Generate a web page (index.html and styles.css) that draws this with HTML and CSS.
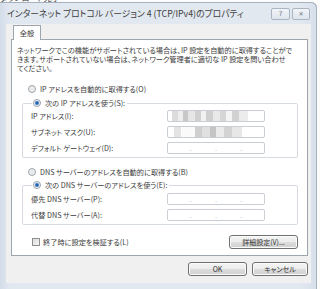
FILE: index.html
```html
<!DOCTYPE html>
<html lang="ja">

<head>
    <meta charset="UTF-8">
    <meta name="viewport" content="width=device-width, initial-scale=1.0">
    <title>インターネット プロトコル バージョン 4 (TCP/IPv4)のプロパティ</title>
    <link rel="stylesheet" href="styles.css">
</head>

<body>
    <div class="behind"><span>ダウンロード完了</span></div>
    <div class="window">
        <div class="titlebar">
            <span class="title">インターネット プロトコル バージョン 4 (TCP/IPv4)のプロパティ</span>
            <div class="capBtns">
                <span class="capBtn help">?</span>
                <span class="capBtn close">✕</span>
            </div>
        </div>
        <div class="client">
            <div class="tabs"><span class="tab">全般</span></div>
            <div class="panel">
                <p class="intro">ネットワークでこの機能がサポートされている場合は、IP 設定を自動的に取得することがで<br>きます。サポートされていない場合は、ネットワーク管理者に適切な IP 設定を問い合わせ<br>てください。</p>

                <div class="radioLine first"><span class="radio"></span>IP アドレスを自動的に取得する(O)</div>
                <fieldset class="group ipGroup">
                    <legend class="radioLine"><span class="radio on"></span>次の IP アドレスを使う(S):</legend>
                    <div class="fields">
                        <span class="lbl">IP アドレス(I):</span><span class="ipBox mosaic"></span>
                        <span class="lbl">サブネット マスク(U):</span><span class="ipBox mosaic two"></span>
                        <span class="lbl">デフォルト ゲートウェイ(D):</span><span class="ipBox"><i>.</i><i>.</i><i>.</i></span>
                    </div>
                </fieldset>

                <div class="radioLine dnsAuto"><span class="radio"></span>DNS サーバーのアドレスを自動的に取得する(B)</div>
                <fieldset class="group dnsGroup">
                    <legend class="radioLine"><span class="radio on"></span>次の DNS サーバーのアドレスを使う(E):</legend>
                    <div class="fields">
                        <span class="lbl">優先 DNS サーバー(P):</span><span class="ipBox"><i>.</i><i>.</i><i>.</i></span>
                        <span class="lbl">代替 DNS サーバー(A):</span><span class="ipBox"><i>.</i><i>.</i><i>.</i></span>
                    </div>
                </fieldset>

                <div class="checkRow">
                    <label class="check"><span class="box"></span>終了時に設定を検証する(L)</label>
                    <span class="btn adv">詳細設定(V)...</span>
                </div>
            </div>
            <div class="footer">
                <span class="btn ok">OK</span>
                <span class="btn cancel">キャンセル</span>
            </div>
        </div>
    </div>
</body>

</html>
```

FILE: styles.css
```css
body {
    margin: 0;
    height: 289px;
    overflow: hidden;
    background: #fbfbfb;
    font-family: "Noto Sans CJK JP", "Noto Sans", sans-serif;
    font-feature-settings: "palt";
    color: #3a3a3a;
}
.behind {
    height: 2px;
    overflow: hidden;
}
.behind>span {
    display: block;
    margin-top: -6px;
    font-size: 8px;
    line-height: 8px;
    color: #333;
}
.window {
    width: 317px;
    height: 287px;
    background: linear-gradient(90deg, #d3dde9, #e2e8f0 10px, #e2e8f0 300px, #d6dfea);
    border-top-right-radius: 6px;
    box-shadow: inset -1px 0 #a7b2c0, inset 0 1px #a7b2c0;
    display: flex;
    flex-direction: column;
}
.titlebar {
    height: 22px;
    display: flex;
    align-items: center;
    justify-content: space-between;
    padding: 0 7px 0 7px;
}
.title {
    font-size: 8.8px;
    color: #404040;
    white-space: nowrap;
    padding-top: 1px;
}
.capBtns {
    display: flex;
    gap: 2px;
    padding-top: 1px;
}
.capBtn {
    height: 10px;
    border: 1px solid #aab5c3;
    border-radius: 2px;
    background: linear-gradient(#f1f4f8, #dfe5ed);
    font-size: 7px;
    line-height: 10px;
    text-align: center;
    color: #6a7480;
    font-family: "DejaVu Sans", sans-serif;
}
.capBtn.help {
    width: 17px;
}
.capBtn.close {
    width: 16px;
    font-size: 6px;
}
.client {
    margin: 0 6px;
    height: 259px;
    background: #f0f0f0;
    padding: 1px 3px 0 5px;
    box-sizing: border-box;
}
.tabs {
    display: flex;
    padding-left: 2px;
    position: relative;
    z-index: 1;
    margin-bottom: -1px;
}
.tab {
    width: 26px;
    height: 14px;
    border: 1px solid #9da5ad;
    border-bottom: none;
    background: #fff;
    font-size: 7.2px;
    line-height: 14px;
    text-align: center;
}
.panel {
    background: #fff;
    border: 1px solid #9da5ad;
    padding: 6px 9px 6px 5px;
    font-size: 7.2px;
}
.intro {
    margin: 0;
    line-height: 9px;
    white-space: nowrap;
}
.radioLine {
    display: flex;
    align-items: center;
    height: 12px;
    white-space: nowrap;
}
.radioLine.first {
    margin: 10px 0 2px 11px;
}
.radio {
    width: 6px;
    height: 6px;
    border: 1px solid #98a1ab;
    border-radius: 50%;
    background: radial-gradient(#e4e4e4, #f7f7f7);
    margin-right: 4px;
}
.radio.on {
    background: radial-gradient(circle, #245fb0 0 30%, #7aa3d4 42%, #eef2f7 60%);
}
.group {
    margin: 0 0 0 5px;
    border: 1px solid #d5dbe0;
    border-radius: 2px;
    padding: 0 0 3px 8px;
    min-width: 0;
}
.group>legend {
    padding: 0 2px 0 1px;
    margin-left: 1px;
}
.ipGroup>legend {
    margin-bottom: 1px;
}
.dnsGroup>legend {
    margin-bottom: 2px;
}
.fields {
    display: grid;
    grid-template-columns: 136px 98px;
    grid-auto-rows: 12px;
    row-gap: 4px;
    align-items: center;
}
.lbl {
    white-space: nowrap;
}
.ipBox {
    height: 10px;
    border: 1px solid #c9ced4;
    border-radius: 2px;
    display: flex;
    justify-content: space-around;
    padding: 0 10px;
}
.ipBox>i {
    font-style: normal;
    font-size: 6px;
    line-height: 12px;
    color: #9a9a9a;
}
.mosaic {
    background:
        linear-gradient(90deg, #fff 0 4px, #dcdcdc 4px 10px, #eee 10px 15px, #c8c8c8 15px 20px, #e6e6e6 20px 27px, #d0d0d0 27px 33px, #f2f2f2 33px 38px, #cfcfcf 38px 45px, #e9e9e9 45px 52px, #d6d6d6 52px 58px, #f4f4f4 58px 64px, #d2d2d2 64px 71px, #ececec 71px 80px, #fff 80px);
    background-clip: padding-box;
    filter: blur(0.4px);
}
.mosaic.two {
    background:
        linear-gradient(90deg, #fff 0 6px, #e4e4e4 6px 13px, #fafafa 13px 27px, #cfcfcf 27px 34px, #e0e0e0 34px 42px, #c4c4c4 42px 48px, #ebebeb 48px 56px, #d3d3d3 56px 64px, #e7e7e7 64px 74px, #fff 74px);
}
.dnsAuto {
    margin: 8px 0 1px 11px;
}
.checkRow {
    display: flex;
    align-items: center;
    justify-content: space-between;
    margin-top: 10px;
    padding-left: 15px;
}
.check {
    display: flex;
    align-items: center;
    white-space: nowrap;
}
.box {
    width: 6px;
    height: 6px;
    border: 1px solid #8e8f8f;
    background: linear-gradient(135deg, #dcdcdc, #f6f6f6);
    margin-right: 3px;
}
.btn {
    height: 12px;
    border: 1px solid #707070;
    border-radius: 3px;
    background: linear-gradient(#f4f4f4 0, #ececec 50%, #dddddd 51%, #d0d0d0);
    box-shadow: inset 0 0 0 1px #fbfbfb;
    font-size: 7px;
    line-height: 12px;
    text-align: center;
    white-space: nowrap;
    color: #333;
}
.btn.adv {
    width: 67px;
}
.footer {
    display: flex;
    justify-content: flex-end;
    gap: 5px;
    margin-top: 6px;
}
.btn.ok {
    width: 57px;
}
.btn.cancel {
    width: 54px;
}
```
